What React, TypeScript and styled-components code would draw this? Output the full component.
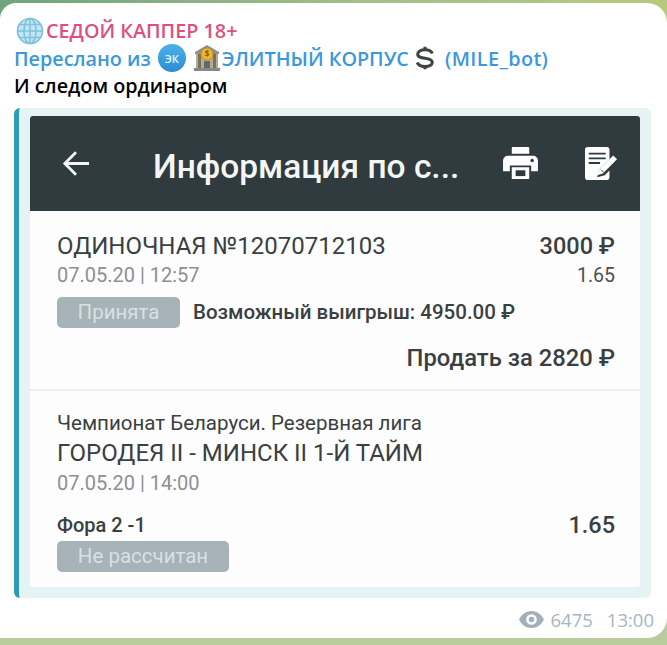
import React from "react";
import styled, { createGlobalStyle } from "styled-components";

const Global = createGlobalStyle`
  html, body { margin: 0; padding: 0; width: 667px; height: 645px; overflow: hidden; background: #b8cb9a; }
  #root { width: 667px; height: 645px; }
`;

const Page = styled.div`
  width: 667px;
  height: 645px;
  box-sizing: border-box;
  padding: 3px 0 7px;
  background:
    linear-gradient(90deg, #6fa47c 0%, #a3bf8a 55%, #b7c97e 100%) top / 100% 40px no-repeat,
    #b8cb9a;
`;

const Bubble = styled.div`
  height: 635px;
  box-sizing: border-box;
  background: #fff;
  border-radius: 16px 20px 20px 0;
  padding: 14px 16px 0 14px;
  font-family: "Open Sans", sans-serif;
  font-weight: 600;
  display: flex;
  flex-direction: column;
`;

const Line = styled.div<{ $color: string }>`
  display: flex;
  align-items: center;
  height: 27.5px;
  font-size: 19.8px;
  white-space: nowrap;
  color: ${(p) => p.$color};
`;

const Badge = styled.span`
  width: 28px;
  height: 28px;
  border-radius: 50%;
  background: linear-gradient(#4cb0e8, #2a8fd4);
  color: #e8f5fd;
  font-size: 11px;
  display: flex;
  align-items: center;
  justify-content: center;
  margin: 0 7px 0 7px;
`;

const Glyph = styled.svg<{ $gap?: number; $lead?: number }>`
  flex: none;
  margin-right: ${(p) => p.$gap ?? 0}px;
  margin-left: ${(p) => p.$lead ?? 0}px;
`;

const BotName = styled.span`
  margin-left: 10px;
  letter-spacing: 0.4px;
`;

const Quote = styled.div`
  margin-top: 8px;
  width: 637px;
  height: 490px;
  box-sizing: border-box;
  background: #e6f3f5;
  border-left: 5px solid #2b9bb6;
  border-radius: 6px;
  padding: 8px 11px 11px 11px;
`;

const Card = styled.div`
  height: 471px;
  background: #fdfdfd;
  border-radius: 3px;
  font-family: Roboto, sans-serif;
  font-weight: 400;
  display: flex;
  flex-direction: column;
  overflow: hidden;
`;

const Header = styled.div`
  height: 95px;
  flex: none;
  background: #2f3b3e;
  color: #fff;
  display: flex;
  align-items: center;
  padding: 0 23px 0 32px;
`;

const Title = styled.div`
  font-size: 33.5px;
  font-weight: 500;
  margin-left: 63px;
  flex: 1;
  color: #f4f6f6;
  white-space: nowrap;
  padding-top: 6px;
`;

const HeaderIcons = styled.div`
  display: flex;
  align-items: center;
  gap: 47px;
`;

const Section = styled.div`
  padding: 0 25px 0 27px;
`;

const BetSection = styled(Section)`
  height: 180px;
  flex: none;
  box-sizing: border-box;
  padding-top: 20px;
  border-bottom: 2px solid #eeeeee;
`;

const EventSection = styled(Section)`
  padding-top: 20px;
`;

const Row = styled.div<{ $h: number; $justify?: string }>`
  display: flex;
  align-items: center;
  justify-content: ${(p) => p.$justify ?? "space-between"};
  height: ${(p) => p.$h}px;
  white-space: nowrap;
`;

const SelectionRow = styled(Row)`
  margin: 16px 0 1px;
`;

const Name = styled.span`
  font-size: 24px;
  color: #3a3f41;
`;

const Amount = styled.span`
  font-size: 23.5px;
  font-weight: 500;
  color: #3a3f41;
`;

const Muted = styled.span`
  font-size: 20px;
  color: #8c9092;
`;

const Coef = styled.span`
  font-size: 19.5px;
  color: #4a4f51;
`;

const Pill = styled.span<{ $w: number }>`
  display: flex;
  align-items: center;
  justify-content: center;
  width: ${(p) => p.$w}px;
  height: 31px;
  border-radius: 5px;
  background: #a6b3b9;
  color: #d8e0e3;
  font-size: 20.5px;
`;

const Strong = styled.span<{ $size: number }>`
  font-size: ${(p) => p.$size}px;
  font-weight: 500;
  color: #3a3f41;
`;

const Win = styled(Strong)`
  margin-left: 13px;
`;

const League = styled.span`
  font-size: 20.5px;
  color: #3a3f41;
`;

const Footer = styled.div`
  display: flex;
  align-items: center;
  justify-content: flex-end;
  height: 26px;
  margin: 9px -3px 0 0;
  color: #a9b5bf;
  font-family: "Open Sans", sans-serif;
  font-size: 18.5px;
  font-weight: 400;
`;

const Views = styled.span`
  margin: 0 14px 0 7px;
`;

const Globe = () => (
  <Glyph $lead={1} $gap={1} width="30" height="28" viewBox="0 0 28 28" fill="none" stroke="#7ec3de" strokeWidth="1.6" aria-hidden>
    <circle cx="14" cy="14" r="12.5" fill="#c5e4f0" />
    <ellipse cx="14" cy="14" rx="6" ry="12.5" />
    <path d="M14 1.5v25M1.5 14h25M3.5 7.5h21M3.5 20.5h21" />
  </Glyph>
);

const Bank = () => (
  <Glyph $gap={1} width="28" height="28" viewBox="0 0 28 28" aria-hidden>
    <path d="M14 1 26 8v2H2V8z" fill="#8d8f91" />
    <rect x="3" y="10" width="22" height="14" fill="#b9a98f" />
    <rect x="5" y="10" width="3" height="14" fill="#7a6f63" />
    <rect x="20" y="10" width="3" height="14" fill="#7a6f63" />
    <rect x="11" y="17" width="6" height="7" fill="#5d6b70" />
    <rect x="1" y="24" width="26" height="3" fill="#85878a" />
    <circle cx="14" cy="10" r="6" fill="#efb62f" stroke="#c98d12" />
    <text x="14" y="13" fontSize="8" fontWeight="700" textAnchor="middle" fill="#7a5600" fontFamily="Open Sans">$</text>
  </Glyph>
);

const Dollar = () => (
  <Glyph $lead={1} width="20" height="26" viewBox="0 0 22 28" fill="none" stroke="#3e4245" strokeWidth="3.4" aria-hidden>
    <path d="M19 9c-1-3-4-4-8-4-4.5 0-8 1.8-8 4.8 0 3.2 3.5 3.8 8 4.4s8 1.4 8 4.6c0 3-3.5 4.7-8 4.7-4.5 0-7.5-1.5-8.5-4.5" />
    <path d="M11 1.5v3.5M11 23v3.5" />
  </Glyph>
);

const ArrowLeft = () => (
  <svg width="28" height="27" viewBox="0 0 30 28" fill="none" stroke="#f4f6f6" strokeWidth="3" aria-hidden>
    <path d="M29 14H3M15 2 3 14l12 12" />
  </svg>
);

const Printer = () => (
  <svg width="35" height="32" viewBox="0 0 36 33" aria-hidden>
    <path fill="#fff" d="M9 1a1 1 0 0 1 1-1h16a1 1 0 0 1 1 1v6H9zM5 9h26a5 5 0 0 1 5 5v11h-7v-6H7v6H0V14a5 5 0 0 1 5-5zM9 21h18v12H9z" />
    <rect x="13" y="24" width="10" height="6" fill="#2f3b3e" />
    <circle cx="30" cy="14" r="1.8" fill="#2f3b3e" />
  </svg>
);

const Note = () => (
  <svg width="32" height="33" viewBox="0 0 34 35" aria-hidden>
    <path fill="#fff" d="M3 0h20a3 3 0 0 1 3 3v10L15 24l-2 8 8-2 5-5v7a3 3 0 0 1-3 3H3a3 3 0 0 1-3-3V3a3 3 0 0 1 3-3z" />
    <path stroke="#2f3b3e" strokeWidth="2" d="M4 7h18M4 12h18M4 17h12" />
    <path fill="#fff" d="M30 9l4 4-15 15-6 2 2-6z" />
    <path stroke="#2f3b3e" strokeWidth="1" d="M17 24l3 3" />
  </svg>
);

const Eye = () => (
  <svg width="25" height="17" viewBox="0 0 25 17" aria-hidden>
    <path fill="#a3afb9" fillRule="evenodd" d="M12.5 0C18 0 22.5 3.5 25 8.5 22.5 13.5 18 17 12.5 17S2.5 13.5 0 8.5C2.5 3.5 7 0 12.5 0zm0 3.2a5.3 5.3 0 1 0 0 10.6 5.3 5.3 0 0 0 0-10.600z" />
    <circle cx="12.5" cy="8.5" r="2.8" fill="#a3afb9" />
  </svg>
);

export default function App() {
  return (
    <Page>
      <Global />
      <Bubble>
        <Line $color="#dd4f7e">
          <Globe />
          СЕДОЙ КАППЕР 18+
        </Line>
        <Line $color="#3a98dc">
          Переслано из
          <Badge>ЭК</Badge>
          <Bank />
          ЭЛИТНЫЙ КОРПУС&nbsp;
          <Dollar />
          <BotName>(MILE_bot)</BotName>
        </Line>
        <Line $color="#000">И следом ординаром</Line>
        <Quote>
          <Card>
            <Header>
              <ArrowLeft />
              <Title>Информация по с...</Title>
              <HeaderIcons>
                <Printer />
                <Note />
              </HeaderIcons>
            </Header>
            <BetSection>
              <Row $h={30}>
                <Name>ОДИНОЧНАЯ №12070712103</Name>
                <Amount>3000 ₽</Amount>
              </Row>
              <Row $h={29}>
                <Muted>07.05.20 | 12:57</Muted>
                <Coef>1.65</Coef>
              </Row>
              <Row $h={45} $justify="flex-start">
                <Pill $w={123}>Принята</Pill>
                <Win $size={20.5}>Возможный выигрыш: 4950.00 ₽</Win>
              </Row>
              <Row $h={46} $justify="flex-end">
                <Strong $size={23.8}>Продать за 2820 ₽</Strong>
              </Row>
            </BetSection>
            <EventSection>
              <Row $h={24}>
                <League>Чемпионат Беларуси. Резервная лига</League>
              </Row>
              <Row $h={36}>
                <Name>ГОРОДЕЯ II - МИНСК II 1-Й ТАЙМ</Name>
              </Row>
              <Row $h={24}>
                <Muted>07.05.20 | 14:00</Muted>
              </Row>
              <SelectionRow $h={29}>
                <Strong $size={20}>Фора 2 -1</Strong>
                <Strong $size={23.5}>1.65</Strong>
              </SelectionRow>
              <Pill $w={172}>Не рассчитан</Pill>
            </EventSection>
          </Card>
        </Quote>
        <Footer>
          <Eye />
          <Views>6475</Views>
          13:00
        </Footer>
      </Bubble>
    </Page>
  );
}
